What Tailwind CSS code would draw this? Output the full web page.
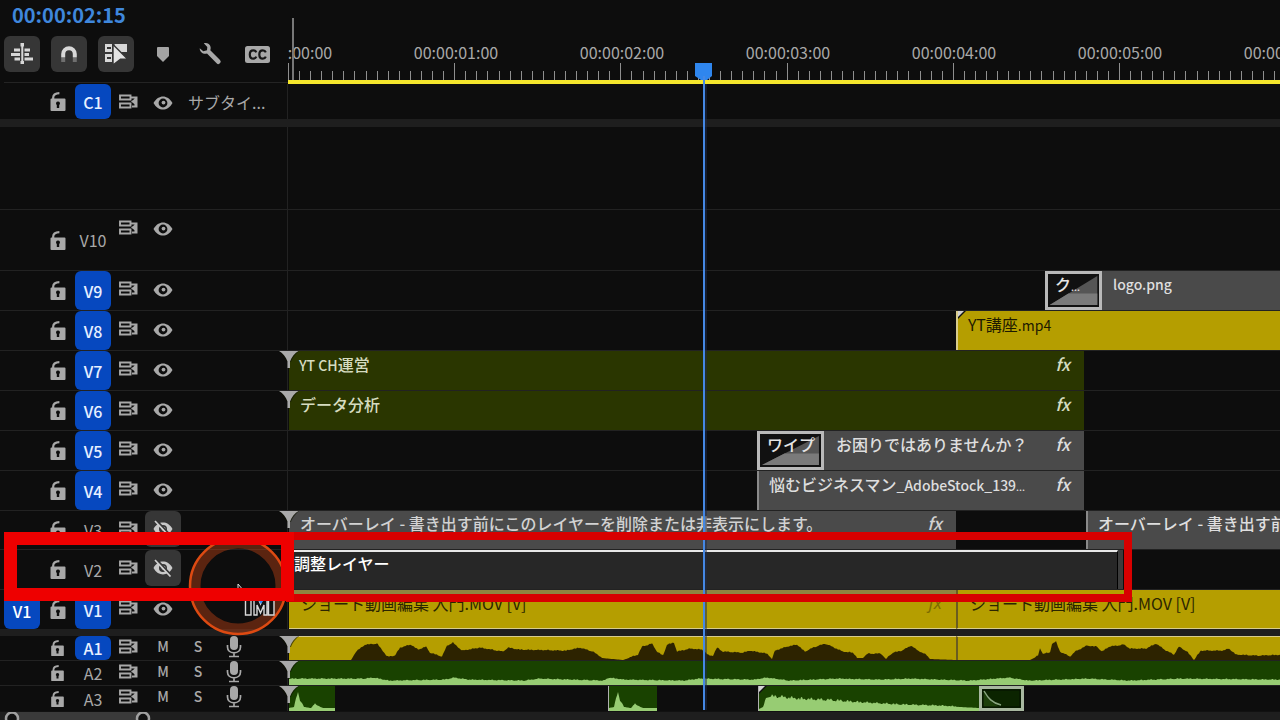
<!DOCTYPE html>
<html lang="ja">
<head>
<meta charset="utf-8">
<title>タイムライン</title>
<script src="https://cdn.jsdelivr.net/npm/@tailwindcss/browser@4"></script>
</head>
<body class="relative flex min-h-screen flex-col overflow-hidden bg-[#0d0d0d] font-['Noto_Sans_CJK_JP',sans-serif] text-base leading-6 font-medium text-[#a8a8a8]">

<svg class="hidden" aria-hidden="true">
  <symbol id="lock" viewBox="0 0 16 19">
    <path d="M3.2 8V5.6C3.2 2.8 5 1.4 9.4 1.2" fill="none" stroke="currentColor" stroke-width="2.2"/>
    <path fill="currentColor" fill-rule="evenodd" d="M1.5 6.5h13a1 1 0 0 1 1 1V18a1 1 0 0 1-1 1h-13a1 1 0 0 1-1-1V7.500a1 1 0 0 1 1-1zM8 9.500a2 2 0 0 0-1.200 3.600V16h2.400v-2.900A2 2 0 0 0 8 9.500z"/>
  </symbol>
  <symbol id="sync" viewBox="0 0 19 15">
    <path fill="none" stroke="currentColor" stroke-width="1.900" d="M1 1.500h10.500v4H1zM1 9.500h10.500v4H1z"/>
    <path fill="currentColor" d="M11 2.500h7.500v11H13v-2h2.500v-7H11z"/>
    <path fill="currentColor" d="M12 7.500l4-3v6z"/>
  </symbol>
  <symbol id="eye" viewBox="0 0 20 14">
    <path fill="currentColor" fill-rule="evenodd" d="M.5 7C3 2.500 6.500.4 10 .4S17 2.500 19.500 7C17 11.500 13.500 13.600 10 13.600S3 11.500.5 7zM10 2.600a4.400 4.400 0 1 0 0 8.800 4.400 4.400 0 0 0 0-8.800z"/>
    <circle cx="10.500" cy="6.600" r="1.900" fill="currentColor"/>
  </symbol>
  <symbol id="eyeoff" viewBox="0 0 20 18">
    <path fill="#c8c8c8" fill-rule="evenodd" d="M.5 9C3 4.500 6.500 2.600 10 2.600S17 4.500 19.500 9C17 13.500 13.500 15.400 10 15.400S3 13.500.5 9zM10 5a4 4 0 1 0 0 8 4 4 0 0 0 0-8z"/>
    <circle cx="10.500" cy="8.700" r="2" fill="#c8c8c8"/>
    <path d="M3.500.5l15 16" stroke="#363636" stroke-width="2"/>
    <path d="M2 1l15.500 16.500" stroke="#d0d0d0" stroke-width="1.700"/>
  </symbol>
  <symbol id="mic" viewBox="0 0 16 22">
    <rect x="4" y="0" width="8" height="14" rx="4" fill="currentColor"/>
    <path d="M1.500 9v2c0 3.500 2.600 5.800 6.500 5.800s6.500-2.300 6.500-5.800V9M8 17v4M3 20.500h10" fill="none" stroke="currentColor" stroke-width="1.700"/>
  </symbol>
  <symbol id="fade" viewBox="0 0 20 17">
    <path fill="#0d1000" d="M0 0h20.500C18 1.500 14 6 12 11h-4z" opacity=".6"/>
    <path fill="#a9a9a9" d="M0 0h19.500C16 2 12.500 6 11 10.500V17H8.500v-6.500C7 6 3.500 2 0 0z"/>
  </symbol>
  <symbol id="corner" viewBox="0 0 8 8"><path fill="#111" d="M0 0h8L0 8z"/><path fill="#d2d2d2" d="M0 0h6L0 6z"/></symbol>
</svg>

<header class="flex">
  <div class="h-[84px] w-72 shrink-0 pl-1">
    <div class="h-8 pl-2 text-xl leading-[30px] font-bold text-[#3f87dc]">00:00:02:15</div>
    <div class="mt-1 flex gap-[11px] text-[#d8d8d8]">
      <button aria-label="ネスト" class="grid size-9 shrink-0 place-items-center rounded-md bg-[#363636]">
        <svg width="24" height="22" viewBox="0 0 24 22" fill="currentColor"><path d="M10.500 0h3.500v3.500h-3.500zM4 5.500h6v3H4zM14.500 5.500H20v3h-5.500zM1 10h9v3H1zM14.500 10H19v3h-4.500zM4.500 14.500H10v3H4.500zM14.500 14.500H23v3h-8.500zM10.500 18H14v3h-3.500zM11.300 3h2v16h-2z"/></svg>
      </button>
      <button aria-label="スナップ" class="grid size-9 shrink-0 place-items-center rounded-md bg-[#363636]">
        <svg width="18" height="18" viewBox="0 0 18 18"><path d="M3.200 12.500V9a5.800 5.800 0 0 1 11.600 0v3.500" fill="none" stroke="#d8d8d8" stroke-width="4"/><path d="M3.200 13v4M14.800 13v4" stroke="#6f6f6f" stroke-width="4"/></svg>
      </button>
      <button aria-label="リンクされた選択" class="grid size-9 shrink-0 place-items-center rounded-md bg-[#363636]">
        <svg width="24" height="22" viewBox="0 0 24 22"><path fill="#d8d8d8" d="M1 1h7v8H1zM10.500 1H23v8H10.500zM1 11h7v8H1z"/><path fill="#363636" d="M3 4h4v2H3zM3 14h4v2H3z"/><path fill="#e4e4e4" stroke="#363636" stroke-width="1.400" d="M9 1.500L23.500 16l-7 .3L9 22z"/></svg>
      </button>
      <button aria-label="マーカー" class="grid size-9 shrink-0 place-items-center text-[#a4a4a4]">
        <svg width="12" height="15" viewBox="0 0 12 15"><path fill="currentColor" d="M1 0h10a1 1 0 0 1 1 1v8l-6 6-6-6V1a1 1 0 0 1 1-1z"/></svg>
      </button>
      <button aria-label="設定" class="grid size-9 shrink-0 place-items-center text-[#a8a8a8]">
        <svg width="24" height="24" viewBox="0 0 24 24"><path fill="currentColor" d="M5.800 1.300C8.500.4 12 1.600 12.600 5c.2 1.300 0 2.300-.3 3.200l9.700 9.800a2.300 2.300 0 0 1-3.400 3.300L9 11.600c-3.500 1-7.300-1.200-7.300-5.300L5.300 9.300 9 8.300 9.300 5z"/></svg>
      </button>
      <button aria-label="キャプション" class="grid size-9 shrink-0 place-items-center text-[#a8a8a8]">
        <svg width="25" height="17" viewBox="0 0 25 17"><rect width="25" height="17" rx="2.500" fill="currentColor"/><path d="M11.300 6.300C10.800 5 9.800 4.300 8.300 4.300 6 4.300 4.800 6 4.800 8.500s1.200 4.200 3.500 4.200c1.500 0 2.500-.7 3-2M20.800 6.300c-.5-1.300-1.500-2-3-2-2.300 0-3.500 1.700-3.500 4.200s1.200 4.200 3.500 4.200c1.500 0 2.500-.7 3-2" fill="none" stroke="#161616" stroke-width="2.200"/></svg>
      </button>
    </div>
    <div class="mt-2.5 border-t border-[#242424]"></div>
  </div>
  <div class="relative min-w-0 flex-1 overflow-hidden border-b-4 border-[#f4e62c] pt-10">
    <div class="-ml-[81px] flex text-center font-normal text-[#a8a8a8]">
      <span class="w-[166px] shrink-0">00:00:00:00</span><span class="w-[166px] shrink-0">00:00:01:00</span><span class="w-[166px] shrink-0">00:00:02:00</span><span class="w-[166px] shrink-0">00:00:03:00</span><span class="w-[166px] shrink-0">00:00:04:00</span><span class="w-[166px] shrink-0">00:00:05:00</span><span class="w-[166px] shrink-0">00:00:06:00</span>
    </div>
    <svg class="absolute inset-0 h-20 w-full" fill="none" stroke-width="1"><path id="ticks" stroke="#8f8f8f"/><path d="M5 18V80" stroke="#777" stroke-width="2"/></svg>
  </div>
</header>

<main id="tracks"></main>

<footer class="relative min-h-2 flex-1 overflow-hidden border-t border-[#111] bg-[#1e1e1e]">
  <div class="ml-3 h-2 w-[131px] bg-[#3a3a3a]"></div>
  <svg class="absolute inset-0 h-2 w-40" fill="#111" stroke="#a0a0a0" stroke-width="2.500"><circle cx="12" cy="6.500" r="6"/><circle cx="143" cy="6.500" r="6"/></svg>
</footer>

<!-- playhead -->
<svg class="pointer-events-none absolute top-[62px] left-[694px]" width="20" height="648" viewBox="0 0 20 648">
  <path fill="#2f86ee" d="M1 1h17v13l-5 4H7l-6-4z"/><path fill="#1c2c50" d="M11 22h2v626h-2z" opacity=".5"/><path fill="#4588e4" d="M9 14h2v634H9z"/>
</svg>

<!-- click ripple and pointer -->
<svg class="pointer-events-none absolute top-[536px] left-[188px]" width="100" height="102" viewBox="0 0 100 102">
  <circle cx="50" cy="50" r="43" fill="none" stroke="#d94a16" stroke-opacity=".38" stroke-width="11"/>
  <circle cx="50" cy="50" r="48" fill="none" stroke="#dd4a12" stroke-width="2.500"/>
  <path d="M50 48l6 7v4h-6z" fill="#111" stroke="#ddd" stroke-width="1"/>
  <path d="M57.500 61h5.500v18h-5.500zM80.500 61H86v18h-5.500zM66 79V62h4l2.500 6 2.500-6h4v17h-3V69l-3.500 8L69 69v10z" fill="#111" stroke="#d8d8d8" stroke-width="1.400"/>
  <path d="M69 62h8l-4 6z" fill="#2f86ee"/>
</svg>

<!-- highlight frames -->
<div class="pointer-events-none absolute top-[532px] left-[286px] h-[70px] w-[846px] border-8 border-[#d80000]"></div>
<div class="pointer-events-none absolute top-[532px] left-1 h-[69px] w-[290px] border-[13px] border-[#ee0000]"></div>

<script>
const icon = (id, cls) => `<svg class="${cls}"><use href="#${id}"/></svg>`;

// Left side of a track: source patch, lock, target, sync lock, output and audio switches
function head(t) {
  const audio = t.kind === 'audio';
  const patch = t.src
    ? `<button class="ml-1 h-[38px] w-9 rounded-md bg-[#0648bf] pt-0.5 text-white">${t.src}</button>`
    : `<span class="ml-1 w-9"></span>`;
  const target = t.on
    ? (audio
      ? `<button class="ml-2 h-6 w-9 rounded-md bg-[#0648bf] text-[#e8f0ff]">${t.name}</button>`
      : `<button class="ml-2 h-full w-9 rounded-md bg-[#0648bf] text-[#e8f0ff]">${t.name}</button>`)
    : `<button class="ml-2 w-9 font-normal text-[#a8a8a8]">${t.name}</button>`;
  const lock = audio ? icon('lock', 'h-4 w-[15px]') : icon('lock', 'h-[19px] w-4');
  const sync = audio
    ? `<button aria-label="同期ロック" class="ml-2 h-5 self-start">${icon('sync', 'h-[15px] w-[19px]')}</button>`
    : `<button aria-label="同期ロック" class="ml-2 h-[34px] self-start">${icon('sync', 'h-[15px] w-[19px]')}</button>`;
  const out = audio
    ? `<button aria-label="ミュート" class="ml-[7px] h-5 w-9 self-start text-sm leading-5">M</button><button aria-label="ソロ" class="h-5 w-[34px] self-start text-sm leading-5">S</button><button aria-label="ボイスオーバー録音" class="ml-px grid h-[22px] w-9 place-items-center self-start">${icon('mic', 'h-[22px] w-4')}</button>`
    : t.hidden
      ? `<button aria-label="トラック出力の切り替え" class="ml-[7px] grid h-9 w-9 place-items-center self-start rounded-md bg-[#363636]">${icon('eyeoff', 'h-[18px] w-5')}</button>`
      : `<button aria-label="トラック出力の切り替え" class="ml-[7px] grid h-[37px] w-9 place-items-center self-start">${icon('eye', 'h-[14px] w-5')}</button>`;
  return `${patch}<button aria-label="トラックのロック" class="ml-2.5 w-[17px]">${lock}</button>${target}${sync}${out}${t.label ? `<span class="ml-[7px] font-normal">${t.label}</span>` : ''}`;
}

const gap = {
  v9: '<div class="w-[756px] shrink-0"></div>', v8: '<div class="w-[667px] shrink-0"></div>', v5: '<div class="w-[468px] shrink-0"></div>',
  v3: '<div class="w-[130px] shrink-0"></div>'
};
const fx = '<em class="ml-auto pr-3.5 font-[\'Noto_Sans\',\'Open_Sans\',sans-serif] text-[17px]">fx</em>';
const dots = '<span class="text-[10px]">...</span>';
const latin = s => `<span class="text-sm leading-none">${s}</span>`;
const grey = 'border-l-2 border-[#8a8a8a] bg-[#4a4a4a] text-[#dedede]';
const fadeMark = icon('fade', 'absolute top-0 -left-[10px] z-10 h-[17px] w-5');
const corner = icon('corner', 'absolute top-0 left-0 size-2');
const transition = (w, text) => `<div class="${w} relative h-full shrink-0 border-[3px] border-[#b9b9b9] text-[#e4e4e4]"><svg class="absolute inset-0 size-full" viewBox="0 0 60 34" preserveAspectRatio="none"><path fill="#111" d="M0 0h60v34H0z"/><path fill="#555" d="M2 32L58 2v30z"/><path fill="#7a7a7a" d="M2 32L24 20h34v12z"/></svg><span class="relative block pl-[7px] leading-5">${text}</span></div>`;

const tracks = [
  { name: 'C1', on: 1, label: 'サブタイ...', h: 'h-[35px]', line: '' },
  { bar: 'h-2' },
  { blank: 1, h: 'h-[83px]' },
  { name: 'V10', h: 'h-[61px]' },
  { name: 'V9', on: 1, h: 'h-10', clips: gap.v9 + transition('w-[57px]', 'ク' + dots) + `<div class="h-full flex-1 bg-[#4a4a4a] pl-[11px] text-sm leading-[26px] text-[#dedede]">logo.png</div>` },
  { name: 'V8', on: 1, h: 'h-10', clips: gap.v8 + `<div class="relative h-full flex-1 border-l-2 border-[#d8cc8c] bg-[#b59e00] pl-[10px] leading-[26px] font-normal text-[#1d1a00]">${corner}YT講座${latin('.mp4')}</div>` },
  { name: 'V7', on: 1, h: 'h-10', fade: 1, clips: `<div class="flex h-full w-[795px] shrink-0 bg-[#2a3600] pl-2.5 leading-[26px] text-[#d6dcc0]"><span>${latin('YT CH')}運営</span>${fx}</div>` },
  { name: 'V6', on: 1, h: 'h-10', fade: 1, clips: `<div class="flex h-full w-[795px] shrink-0 bg-[#2a3600] pl-[11px] leading-[26px] text-[#d6dcc0]">データ分析${fx}</div>` },
  { name: 'V5', on: 1, h: 'h-10', clips: gap.v5 + transition('w-[67px]', 'ワイプ') + `<div class="flex h-full w-[260px] shrink-0 bg-[#4a4a4a] pl-3 leading-[26px] text-[#dedede]">お困りではありませんか？${fx}</div>` },
  { name: 'V4', on: 1, h: 'h-10', clips: gap.v5 + `<div class="flex h-full w-[327px] shrink-0 pl-2.5 leading-[26px] ${grey}"><span>悩むビジネスマン${latin('_AdobeStock_139')}${dots}</span>${fx}</div>` },
  { name: 'V3', hidden: 1, h: 'h-[39px]', fade: 1, clips: `<div class="flex h-full w-[667px] shrink-0 bg-[#4a4a4a] pl-[11px] leading-6 text-[#d2d2d2]">オーバーレイ - 書き出す前にこのレイヤーを削除または非表示にします。${fx}</div>${gap.v3}<div class="h-full flex-1 overflow-hidden pl-2.5 leading-6 whitespace-nowrap ${grey}">オーバーレイ - 書き出す前に</div>` },
  { name: 'V2', hidden: 1, h: 'h-10', clips: `<div class="h-full w-[829px] shrink-0 border-t-2 border-r border-t-[#e8e8e8] border-r-black bg-[#272727] pl-[5px] leading-[22px] font-medium text-white">調整レイヤー</div><div class="h-full w-[5px] bg-[#3c3c3c]"></div>` },
  { name: 'V1', on: 1, src: 'V1', h: 'h-[39px]', line: '', clips: `<div class="flex h-full w-[667px] shrink-0 border-t-4 border-b border-t-[#8f8440] border-b-[#d8cc8c] bg-[#b59e00] pl-3 leading-[18px] font-normal text-[#2b2500]">ショート動画編集 入門.MOV [V]<em class="ml-auto pr-3.5 font-['Noto_Sans',sans-serif] text-[17px] text-[#7d6d00]">fx</em></div><div class="h-full flex-1 border-b border-l-2 border-b-[#d8cc8c] border-l-[#6a5c20] bg-[#b59e00] pt-1 pl-3 leading-[18px] font-normal text-[#2b2500]">ショート動画編集 入門.MOV [V]</div>` },
  { bar: 'h-[7px]' },
  { name: 'A1', on: 1, kind: 'audio', h: 'h-[25px]', fade: 1, clips: `<div class="h-full w-[667px] shrink-0 border-t border-[#d8cc8c] bg-[#b59e00]"><svg class="h-full w-full" fill="#2d2300"><path data-wave="a1a"/></svg></div><div class="h-full min-w-0 flex-1 border-t border-l-2 border-t-[#d8cc8c] border-l-[#6a5c20] bg-[#b59e00]"><svg class="h-full w-full" fill="#2d2300"><path data-wave="a1b"/></svg></div>` },
  { name: 'A2', kind: 'audio', h: 'h-[25px]', fade: 1, clips: `<div class="h-full min-w-0 flex-1 bg-[#194200]"><svg class="h-full w-full" fill="#97cc73"><path data-wave="a2"/></svg></div>` },
  { name: 'A3', kind: 'audio', h: 'h-[25px]', fade: 1, line: '', clips: `<div class="h-full w-[46px] shrink-0 bg-[#194200]"><svg class="h-full w-full" fill="#97cc73"><path data-wave="a3a"/></svg></div><div class="w-[273px] shrink-0"></div><div class="h-full w-[49px] shrink-0 border-l border-[#b0b0b0] bg-[#194200]"><svg class="h-full w-full" fill="#97cc73"><path data-wave="a3a"/></svg></div><div class="w-[101px] shrink-0"></div><div class="relative h-full w-[221px] shrink-0 border-l border-[#b0b0b0] bg-[#194200]"><svg class="h-full w-full" fill="#97cc73"><path data-wave="a3b"/></svg>${icon('corner', 'absolute top-0 left-0 size-2')}</div><div class="h-full w-[45px] shrink-0 border-[3px] border-[#a8b8a0] bg-[#0b2400]"><svg class="h-full w-full" fill="none"><path fill="#1c3f0a" d="M1 1c4 7 8 14 18 17H1z"/><path d="M1 1h37v17H1z" stroke="#050f00"/><path d="M2 2c4 7 8 12 17 14" stroke="#8aa680" stroke-width="1.500"/></svg></div>` }
];

document.getElementById('tracks').innerHTML = tracks.map(t => {
  if (t.bar) return `<div class="${t.bar} bg-[#1e1e1e]"></div>`;
  const line = t.line === '' ? '' : 'border-b border-[#222222]';
  return `<section class="flex ${t.h} ${line}"><div class="flex w-72 shrink-0 items-center border-r border-[#222222]">${t.blank ? '' : head(t)}</div><div class="relative ml-px min-w-0 flex-1">${t.fade ? fadeMark : ''}<div class="flex h-full overflow-hidden">${t.clips || ''}</div></div></section>`;
}).join('');

// Ruler: one tick in every two frames, a tall one on each second
let d = '';
for (let i = 0; i < 90; i++) {
  const x = Math.round(i * 166.2 / 15) + 0.5;
  d += `M${x} ${i % 15 ? 71 : 63}V80`;
}
document.getElementById('ticks').setAttribute('d', d);

// Waveforms: [x, height] points, with a small ripple between them
const waves = {
  a1a: [1, [[0,1],[62,1],[67,9],[76,16],[88,17],[93,11],[98,4],[106,5],[111,13],[122,16],[129,11],[137,14],[141,8],[153,4],[158,15],[164,18],[173,10],[191,13],[214,9],[219,13],[231,11],[277,10],[291,13],[304,9],[313,3],[334,1],[349,6],[353,14],[363,17],[368,9],[374,5],[378,16],[385,18],[388,9],[401,12],[413,11],[420,5],[424,5],[428,13],[434,9],[454,8],[461,10],[478,7],[483,2],[486,10],[498,14],[508,16],[516,9],[524,13],[536,17],[543,14],[554,9],[564,8],[568,3],[574,3],[579,7],[592,7],[597,2],[604,8],[613,10],[622,15],[629,10],[637,6],[641,2],[667,1]]],
  a1b: [1, [[0,1],[72,1],[80,5],[82,12],[85,7],[92,8],[94,17],[98,19],[102,9],[112,4],[117,9],[129,15],[139,14],[144,9],[151,14],[166,16],[172,12],[188,12],[198,17],[208,10],[216,6],[221,14],[229,9],[236,1],[243,10],[265,10],[271,12],[278,6],[300,5],[330,6]]],
  a2: [1, [[0,6],[75,6],[85,7],[100,4],[155,5],[165,7],[180,5],[235,4],[250,6],[315,4],[320,7],[335,5],[395,4],[410,6],[465,5],[478,7],[500,4],[548,6],[590,5],[620,6],[680,4],[720,7],[740,4],[800,6],[840,4],[890,6],[991,5]]],
  a3a: [1, [[0,2],[5,3],[7,11],[9,18],[11,9],[15,3],[22,2],[26,6],[29,4],[34,2],[49,2]]],
  a3b: [4, [[0,1],[4,3],[8,12],[18,12],[40,10],[70,9],[100,7],[140,5],[180,4],[200,3],[221,2]]]
};
document.querySelectorAll('[data-wave]').forEach(p => {
  const [ripple, pts] = waves[p.dataset.wave];
  let path = 'M0 25', k = 0;
  for (let x = 0; x <= pts[pts.length - 1][0]; x++) {
    while (k < pts.length - 2 && pts[k + 1][0] < x) k++;
    const [x0, y0] = pts[k], [x1, y1] = pts[k + 1];
    const y = y0 + (y1 - y0) * (x - x0) / (x1 - x0);
    const n = y > 3 ? Math.abs(Math.sin(x * 12.9) * Math.cos(x * 4.1)) * ripple * (ripple > 1 ? y / 12 : 1) : 0;
    path += `L${x} ${(24 - y - n).toFixed(1)}`;
  }
  p.setAttribute('d', path + 'V25z');
});
</script>
</body>
</html>
